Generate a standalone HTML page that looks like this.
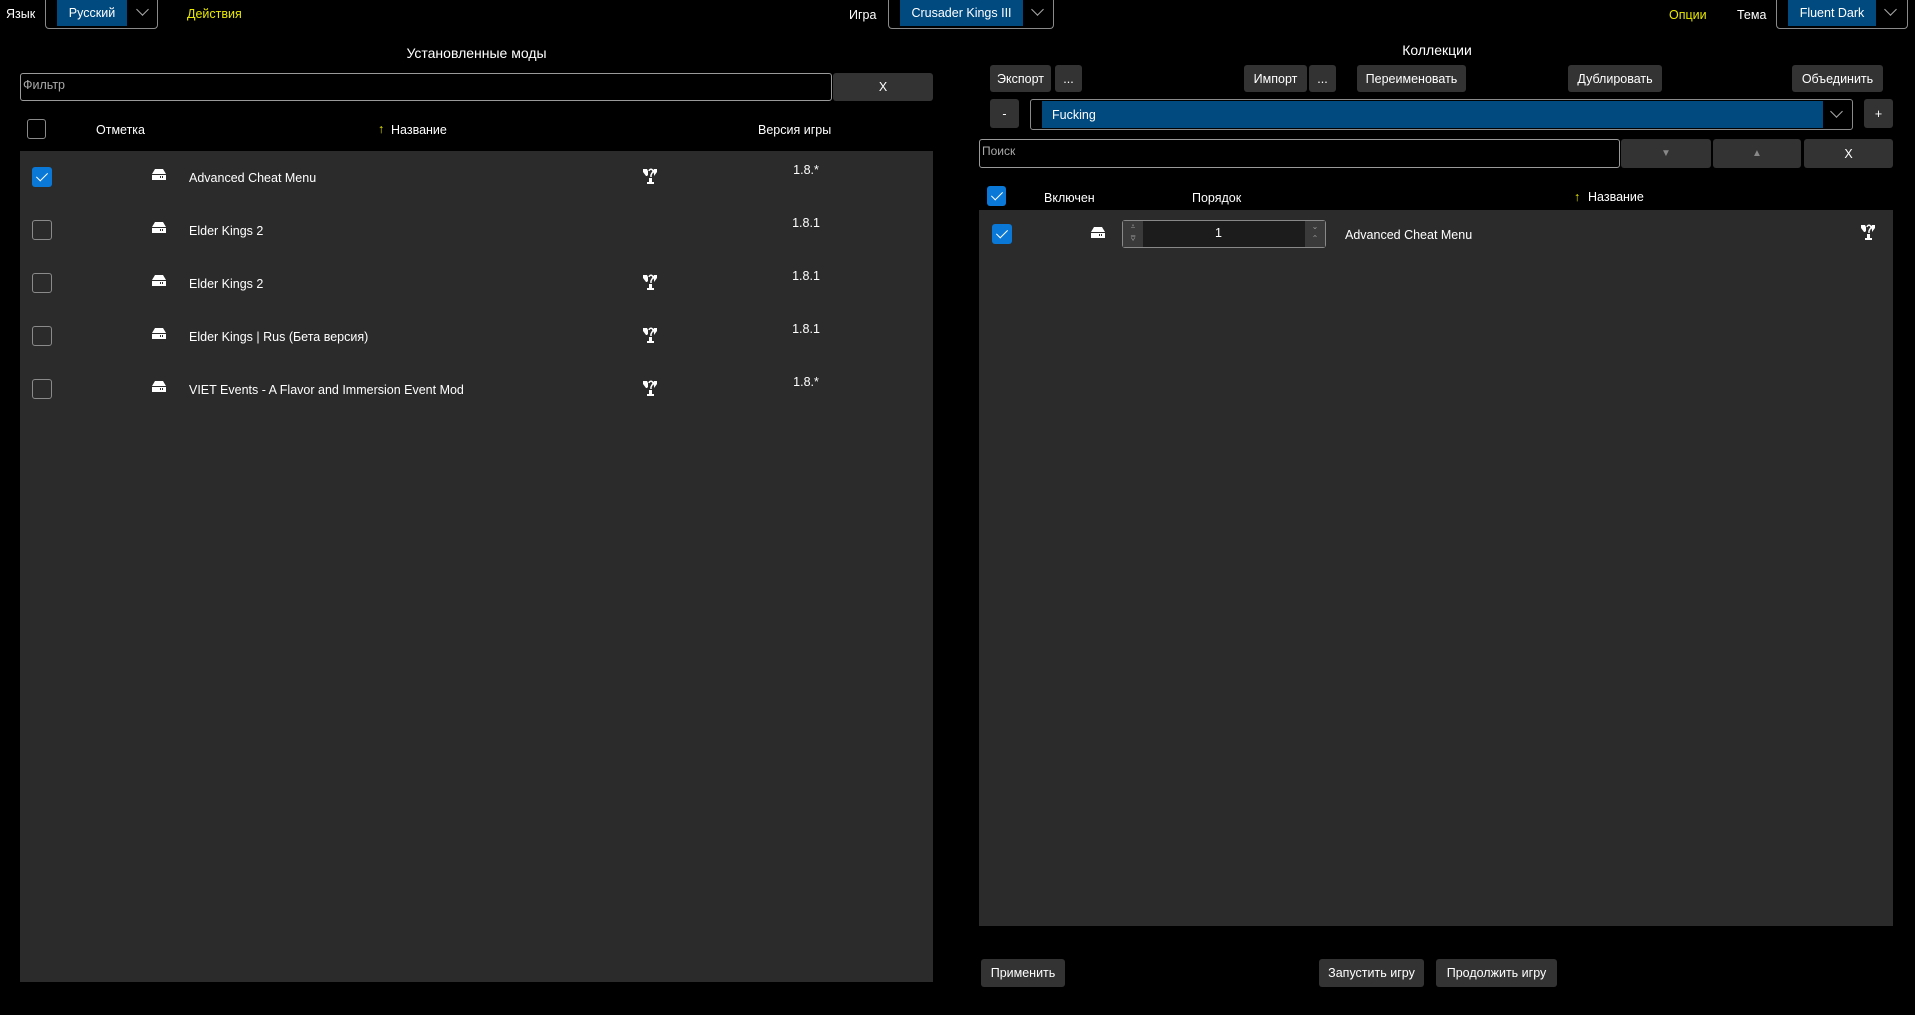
<!DOCTYPE html>
<html><head><meta charset="utf-8"><style>
*{box-sizing:border-box;margin:0;padding:0}
body{width:1915px;height:1015px;background:#000;color:#fff;font-family:"Liberation Sans","DejaVu Sans",sans-serif;font-size:12.5px;position:relative;overflow:hidden}
.a{position:absolute}
.t{position:absolute;white-space:nowrap;line-height:16px}
.y{color:#e8e800}
.btn{position:absolute;background:#333;border-radius:3px;color:#fff;display:flex;align-items:center;justify-content:center;white-space:nowrap}
.dd{position:absolute;border:1px solid #8a8a8a;border-top:none;border-radius:0 0 4px 4px}
.blue{position:absolute;background:#004a80;display:flex;align-items:center;justify-content:center}
.chev{position:absolute;width:9px;height:9px;border-right:1px solid #aaa;border-bottom:1px solid #aaa;transform:rotate(45deg)}
.inp{position:absolute;border:1px solid #9a9a9a;border-radius:3px;background:#000;color:#aaa;padding:4px 2px;font-size:12.5px}
.panel{position:absolute;background:#2b2b2b}
.cb{position:absolute;width:20px;height:20px;border:1px solid #8a8a8a;border-radius:3px}
.cbon{position:absolute;width:20px;height:20px;background:#0a78d7;border-radius:3px}
.cbon:after{content:"";position:absolute;left:7px;top:3px;width:5px;height:10px;border-right:1.5px solid #fff;border-bottom:1.5px solid #fff;transform:rotate(45deg)}
.hdd{position:absolute;width:14px;height:11px}
</style></head><body>

<div class="t" style="left:6px;top:6px">Язык</div>
<div class="dd" style="left:45px;top:0;width:113px;height:29px"></div>
<div class="blue" style="left:57px;top:0;width:70px;height:26px">Русский</div>
<div class="chev" style="left:138px;top:5px"></div>
<div class="t y" style="left:187px;top:6px">Действия</div>

<div class="t" style="left:849px;top:7px">Игра</div>
<div class="dd" style="left:888px;top:0;width:166px;height:29px"></div>
<div class="blue" style="left:900px;top:0;width:123px;height:26px">Crusader Kings III</div>
<div class="chev" style="left:1033px;top:5px"></div>

<div class="t y" style="left:1669px;top:7px">Опции</div>
<div class="t" style="left:1737px;top:7px">Тема</div>
<div class="dd" style="left:1776px;top:0;width:132px;height:29px"></div>
<div class="blue" style="left:1788px;top:0;width:88px;height:26px">Fluent Dark</div>
<div class="chev" style="left:1886px;top:5px"></div>

<div class="t" style="left:380px;top:45px;width:193px;text-align:center;font-size:14px">Установленные моды</div>
<div class="inp" style="left:20px;top:73px;width:812px;height:28px">Фильтр</div>
<div class="btn" style="left:833px;top:73px;width:100px;height:28px">X</div>

<div class="cb" style="left:27px;top:119px;width:19px;height:20px"></div>
<div class="t" style="left:96px;top:122px">Отметка</div>
<div class="t y" style="left:378px;top:121px">↑</div>
<div class="t" style="left:391px;top:122px">Название</div>
<div class="t" style="left:758px;top:122px">Версия игры</div>

<div class="panel" style="left:20px;top:151px;width:913px;height:831px"></div>

<div class="cbon" style="left:32px;top:167px"></div>
<div class="cb" style="left:32px;top:220px"></div>
<div class="cb" style="left:32px;top:273px"></div>
<div class="cb" style="left:32px;top:326px"></div>
<div class="cb" style="left:32px;top:379px"></div>

<svg width="0" height="0" style="position:absolute"><defs>
<symbol id="hd" viewBox="0 0 14 11"><path d="M3 0h8l3 5v6H0V5z" fill="#fff"/><rect x="0" y="5" width="14" height="1" fill="#2b2b2b"/><rect x="8" y="7" width="1" height="2" fill="#2b2b2b"/><rect x="10" y="7" width="1" height="2" fill="#2b2b2b"/></symbol>
<symbol id="st" viewBox="0 0 14 16"><path d="M0 1h4l1 2v4l-1 1h-1l-3-4z" fill="#fff"/><path d="M14 1h-3l-1 2 1 3v2l3-4z" fill="#fff"/><path d="M6 3a2 2 0 1 1 3 2l-1 2v2" stroke="#fff" stroke-width="1.5" fill="none"/><rect x="6" y="10" width="3" height="4" fill="#fff"/><rect x="4" y="14" width="7" height="2" fill="#fff"/></symbol>
</defs></svg>

<svg class="hdd" style="left:152px;top:169px"><use href="#hd"/></svg>
<svg class="hdd" style="left:152px;top:222px"><use href="#hd"/></svg>
<svg class="hdd" style="left:152px;top:275px"><use href="#hd"/></svg>
<svg class="hdd" style="left:152px;top:328px"><use href="#hd"/></svg>
<svg class="hdd" style="left:152px;top:381px"><use href="#hd"/></svg>

<div class="t" style="left:189px;top:170px">Advanced Cheat Menu</div>
<div class="t" style="left:189px;top:223px">Elder Kings 2</div>
<div class="t" style="left:189px;top:276px">Elder Kings 2</div>
<div class="t" style="left:189px;top:329px">Elder Kings | Rus (Бета версия)</div>
<div class="t" style="left:189px;top:382px">VIET Events - A Flavor and Immersion Event Mod</div>

<svg class="a" style="left:643px;top:168px" width="14" height="16"><use href="#st"/></svg>
<svg class="a" style="left:643px;top:274px" width="14" height="16"><use href="#st"/></svg>
<svg class="a" style="left:643px;top:327px" width="14" height="16"><use href="#st"/></svg>
<svg class="a" style="left:643px;top:380px" width="14" height="16"><use href="#st"/></svg>

<div class="t" style="left:790px;top:162px;width:32px;text-align:center">1.8.*</div>
<div class="t" style="left:790px;top:215px;width:32px;text-align:center">1.8.1</div>
<div class="t" style="left:790px;top:268px;width:32px;text-align:center">1.8.1</div>
<div class="t" style="left:790px;top:321px;width:32px;text-align:center">1.8.1</div>
<div class="t" style="left:790px;top:374px;width:32px;text-align:center">1.8.*</div>

<div class="t" style="left:1380px;top:42px;width:114px;text-align:center;font-size:14px">Коллекции</div>
<div class="btn" style="left:990px;top:65px;width:61px;height:27px">Экспорт</div>
<div class="btn" style="left:1055px;top:65px;width:27px;height:27px">...</div>
<div class="btn" style="left:1244px;top:65px;width:63px;height:27px">Импорт</div>
<div class="btn" style="left:1309px;top:65px;width:27px;height:27px">...</div>
<div class="btn" style="left:1357px;top:65px;width:109px;height:27px">Переименовать</div>
<div class="btn" style="left:1568px;top:65px;width:94px;height:27px">Дублировать</div>
<div class="btn" style="left:1792px;top:65px;width:91px;height:27px">Объединить</div>

<div class="btn" style="left:990px;top:99px;width:29px;height:29px">-</div>
<div class="a" style="left:1030px;top:99px;width:823px;height:31px;border:1px solid #8a8a8a;border-radius:3px"></div>
<div class="blue" style="left:1042px;top:101px;width:781px;height:27px;justify-content:flex-start;padding-left:10px">Fucking</div>
<div class="chev" style="left:1832px;top:107px"></div>
<div class="btn" style="left:1864px;top:99px;width:29px;height:29px">+</div>

<div class="inp" style="left:979px;top:139px;width:641px;height:29px;font-size:12px">Поиск</div>
<div class="btn" style="left:1621px;top:139px;width:90px;height:29px;color:#888;font-size:10px">▼</div>
<div class="btn" style="left:1713px;top:139px;width:88px;height:29px;color:#888;font-size:10px">▲</div>
<div class="btn" style="left:1804px;top:139px;width:89px;height:29px">X</div>

<div class="cbon" style="left:987px;top:186px;width:19px"></div>
<div class="t" style="left:1044px;top:190px">Включен</div>
<div class="t" style="left:1192px;top:190px">Порядок</div>
<div class="t y" style="left:1574px;top:189px">↑</div>
<div class="t" style="left:1588px;top:189px">Название</div>

<div class="panel" style="left:979px;top:210px;width:914px;height:716px"></div>
<div class="cbon" style="left:992px;top:224px"></div>
<svg class="hdd" style="left:1091px;top:227px"><use href="#hd"/></svg>
<div class="a" style="left:1122px;top:220px;width:204px;height:28px;border:1px solid #888;border-radius:3px;background:#1c1c1c"></div>
<div class="a" style="left:1123px;top:221px;width:20px;height:26px;background:#3a3a3a;color:#999;font-size:8px;line-height:12px;text-align:center">⩡<br>⩢</div>
<div class="a" style="left:1305px;top:221px;width:20px;height:26px;background:#3a3a3a;color:#999;font-size:8px;line-height:12px;text-align:center">⌄<br>⌃</div>
<div class="t" style="left:1215px;top:225px">1</div>
<div class="t" style="left:1345px;top:227px">Advanced Cheat Menu</div>
<svg class="a" style="left:1861px;top:224px" width="14" height="16"><use href="#st"/></svg>

<div class="btn" style="left:981px;top:959px;width:84px;height:28px">Применить</div>
<div class="btn" style="left:1319px;top:959px;width:105px;height:28px">Запустить игру</div>
<div class="btn" style="left:1436px;top:959px;width:121px;height:28px">Продолжить игру</div>

</body></html>
